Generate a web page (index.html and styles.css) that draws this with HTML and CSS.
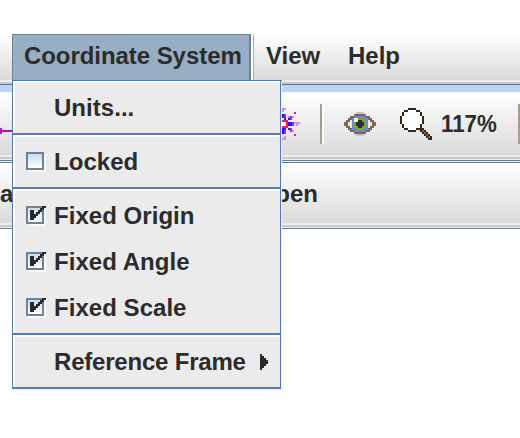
FILE: index.html
```html
<!DOCTYPE html>
<html lang="en"><head><meta charset="utf-8"><title>Coordinate System</title><link rel="stylesheet" href="styles.css"></head>
<body>
<main class="app">
<nav class="menubar"><span class="menu selected">Coordinate System</span><span class="menu view">View</span><span class="menu help">Help</span></nav>
<div class="strip"></div>
<div class="toolbar">
<svg class="axis" width="12" height="6"><path d="M0 2h12v2H0zM0 0h2v6H0z" fill="#bd0fbd"/></svg>
<svg class="spark" width="20" height="32" viewBox="0 0 10 16" shape-rendering="crispEdges"><path fill="#fff" d="M0 7h2v2H0z"/><path fill="#ff1744" d="M0 6h3v4H0V9h2V7H0z"/><path fill="#2d12e8" d="M0 3h1v2H0zM3 7h2v2H3zM0 11h1v2H0zM3 5h1v1H3zM3 10h1v1H3zM1 5h1v1H1zM0 10h2v1H0z"/><path fill="#a328ef" d="M1 3h1v2H1zM4 4h1v1H4zM4 11h1v1H4zM5 7h1v2H5zM1 11h1v2H1zM4 5h1v1H4zM4 10h1v1H4z"/><path fill="#d98be8" d="M0 0h2v1H0zM0 1h1v1H0zM3 4h1v1H3zM5 4h1v1H5zM7 7h1v2H7zM8 7h1v1H8zM5 11h1v1H5zM0 15h2v1H0zM1 14h1v1H1zM6 7h1v1H6z"/><path fill="#ff08b7" d="M6 2h1v1H6zM6 13h1v1H6z"/></svg>
<i class="rule"></i>
<svg class="eye" width="32" height="24" viewBox="0 0 16 12" shape-rendering="crispEdges"><path fill="#cfc0b6" d="M6 0h4v1H6zM6 11h4v1H6zM3 2h1v1H3zM12 2h1v1h-1zM3 9h1v1H3zM12 9h1v1h-1z"/><path fill="#7a6660" d="M5 1h6v1h2v1h1v1h1v1h1v2h-1v1h-1v1h-1v1h-2v1H5v-1H3V9H2V8H1V7H0V5h1V4h1V3h1V2h2z"/><path fill="#eee8d5" d="M4 3h8v1h1v1h1v2h-1v1h-1v1H4V8H3V7H2V5h1V4h1z"/><path fill="#7185d3" d="M5 2h6v1h1v6h-1v1H5V9H4V3h1z"/><path fill="#75ac22" d="M6 3h4v1h1v4h-1v1H6V8H5V4h1z"/><path fill="#eef6dd" d="M5 3h2v2H5z"/><path fill="#302c30" d="M7 4h2v1h1v2H9v1H7V7H6V5h1z"/></svg>
<svg class="glass" width="32" height="32" viewBox="0 0 16 16" shape-rendering="crispEdges"><path fill="#372719" d="M4 0h4v1h2v1h1v2h1v4h-1v2h1v1h1v1h1v1h1v1h1v2h-2v-1h-1v-1h-1v-1h-1v-1h-1v-1H8v1H4v-1H2v-1H1V8H0V4h1V2h1V1h2z"/><path fill="#fff" d="M4 1h4v1h2v2h1v4h-1v2H8v1H4v-1H2V8H1V4h1V2h2z"/><path fill="#826040" d="M11 11h1v1h-1zM12 12h1v1h-1zM13 13h1v1h-1zM14 14h1v1h-1z"/></svg>
<span class="percent">117%</span><i class="rule end"></i>
</div>
<div class="tabs"><span>a</span><span class="open">pen</span></div>
<section class="popup">
<div class="group"><div class="item">Units...</div></div>
<div class="group"><div class="item"><i class="box"></i>Locked</div></div>
<div class="group checks"><div class="item"><i class="box"><svg class="check" width="16" height="14" viewBox="0 0 8 7"><path d="M6 0h2v1H7v1H6v1H5v1H4v1H3v1H2v1H0V2h2v2h1V3h1V2h1V1h1z"/></svg></i>Fixed Origin</div><div class="item"><i class="box"><svg class="check" width="16" height="14" viewBox="0 0 8 7"><path d="M6 0h2v1H7v1H6v1H5v1H4v1H3v1H2v1H0V2h2v2h1V3h1V2h1V1h1z"/></svg></i>Fixed Angle</div><div class="item"><i class="box"><svg class="check" width="16" height="14" viewBox="0 0 8 7"><path d="M6 0h2v1H7v1H6v1H5v1H4v1H3v1H2v1H0V2h2v2h1V3h1V2h1V1h1z"/></svg></i>Fixed Scale</div></div>
<div class="group"><div class="item"><span class="frame">Reference Frame</span><svg class="arrow" width="8" height="16" viewBox="0 0 4 8"><path d="M0 0h1v1h1v1h1v1h1v2H3v1H2v1H1v1H0z"/></svg></div></div>
</section>
</main></body></html>
```
FILE: styles.css
```css
* { box-sizing: border-box; }
body { margin: 0; background: #fff; color: #2c2c2c; font: bold 24px/28px "Liberation Sans", Arial, sans-serif; }
.app { position: relative; width: 520px; height: 438px; padding-top: 34px; overflow: hidden; white-space: nowrap; }
.menubar { display: flex; height: 46px; padding-left: 12px; background: linear-gradient(#fff, #dadada); }
.menu { padding-top: 8px; }
.selected { width: 239px; padding-left: 11px; background: #98aec2; border: 1px solid #6d8292; border-width: 1px 2px 0 1px; padding-top: 7px; box-shadow: 2px 0 #fff, 3px 0 #98aec2; letter-spacing: -.06px; }
.view { margin-left: 15px; width: 82px; }
.strip { height: 12px; background: linear-gradient(#eee 2px, #c8c8c8 2px 4px, #53779f 4px 5px, #bed6ed 5px); }
.toolbar { display: flex; height: 71px; background: linear-gradient(#c8c8c8, #c8c8c8) 0 65px / 100% 2px no-repeat, linear-gradient(#6b8090, #6b8090) 0 68px / 100% 1px no-repeat, linear-gradient(#6b8090, #6b8090) 0 70px / 100% 1px no-repeat, linear-gradient(#fff, #dadada 63px, #eee 63px); }
.axis { flex: none; margin-top: 36px; }
.spark { flex: none; margin: 16px 0 0 270px; }
.rule { flex: none; width: 4px; height: 40px; margin: 12px 0 0 18px; background: linear-gradient(90deg, #a39f91 2px, #fff 2px); }
.eye { flex: none; margin: 20px 0 0 20px; }
.glass { flex: none; margin: 16px 0 0 24px; }
.percent { flex: none; width: 70px; margin: 18px 0 0 9px; transform: scaleX(.93); transform-origin: left; }
.rule.end { margin-left: 7px; }
.tabs { display: flex; height: 66px; padding-top: 17px; background: linear-gradient(#fff, #dadada 60px, #eee 60px 62px, #c8c8c8 62px 64px, #eee 64px 65px, #6b8090 65px); }
.open { margin-left: 262px; }
.popup { position: absolute; left: 12px; top: 80px; width: 270px; height: 310px; padding-bottom: 1px; background: #ebebeb; border: 1px solid #557ab8; border-width: 1px 0 0 1px; }
.popup::after { content: ""; position: absolute; inset: 0 0 0 -1px; border-right: 1px solid #eee; border-bottom: 1px solid #eee; box-shadow: inset -1px -2px #557ab8; }
.group { height: 54px; padding-top: 4px; border-bottom: 2px solid #557ab8; box-shadow: inset 2px 2px #fff; }
.group.checks { height: 146px; }
.group:last-child { border: 0; height: 52px; }
.item { display: flex; align-items: center; position: relative; height: 46px; padding-left: 41px; letter-spacing: .04px; }
.box { position: absolute; left: 13px; top: 13px; width: 18px; height: 18px; border: 2px solid #6d8292; background: linear-gradient(#c9dced, #fff); box-shadow: 2px 2px #fafafa; }
.check { position: absolute; left: 2px; top: -2px; fill: #292929; shape-rendering: crispEdges; }
.frame { width: 191px; letter-spacing: -.2px; }
.arrow { flex: none; margin-left: 15px; fill: #292929; shape-rendering: crispEdges; }
```
